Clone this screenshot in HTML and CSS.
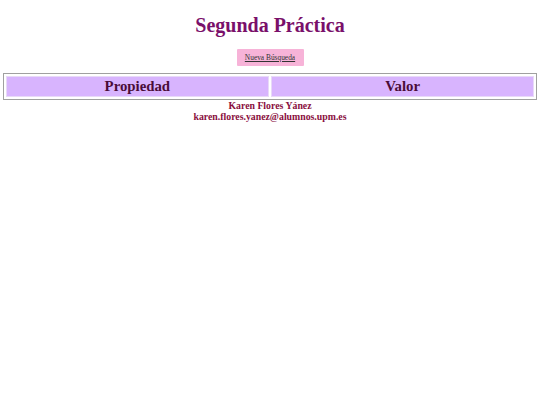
FILE: index.html
```html
<!DOCTYPE html>
<html lang="es">
<head>
<meta charset="utf-8">
<title>Segunda Práctica</title>
<link rel="stylesheet" href="styles.css">
</head>
<body>
<h1 class="title">Segunda Práctica</h1>
<div class="actions">
  <a class="btn" href="#">Nueva Búsqueda</a>
</div>
<table class="props">
  <tr>
    <th>Propiedad</th>
    <th>Valor</th>
  </tr>
</table>
<div class="footer">
  <div>Karen Flores Yánez</div>
  <div>karen.flores.yanez@alumnos.upm.es</div>
</div>
</body>
</html>
```
FILE: styles.css
```css
html, body {
  background: #ffffff;
}
body {
  margin: 0;
  font-family: "Liberation Serif", "Times New Roman", serif;
}
.title {
  margin: 13px 0 0;
  font-size: 20px;
  line-height: 24px;
  font-weight: bold;
  text-align: center;
  color: #7a106a;
}
.actions {
  display: flex;
  justify-content: center;
  margin-top: 12px;
}
.btn {
  display: block;
  width: 67px;
  height: 17px;
  box-sizing: border-box;
  line-height: 17px;
  text-align: center;
  background: #f7b3d8;
  color: #333333;
  font-size: 7.4px;
  text-decoration: underline;
  border-radius: 1px;
}
.props {
  width: 99%;
  margin: 7px auto 0;
  border: 1px solid #a0a0a0;
  border-collapse: separate;
  border-spacing: 2px;
}
.props th {
  width: 50%;
  background: #d8b4fe;
  border: 1px solid #e8d9f8;
  padding: 1px 0;
  font-size: 14.8px;
  line-height: 17px;
  font-weight: bold;
  color: #4a0c38;
}
.footer {
  text-align: center;
  font-weight: bold;
  font-size: 9.8px;
  line-height: 11px;
  color: #8a0f3e;
}
```
